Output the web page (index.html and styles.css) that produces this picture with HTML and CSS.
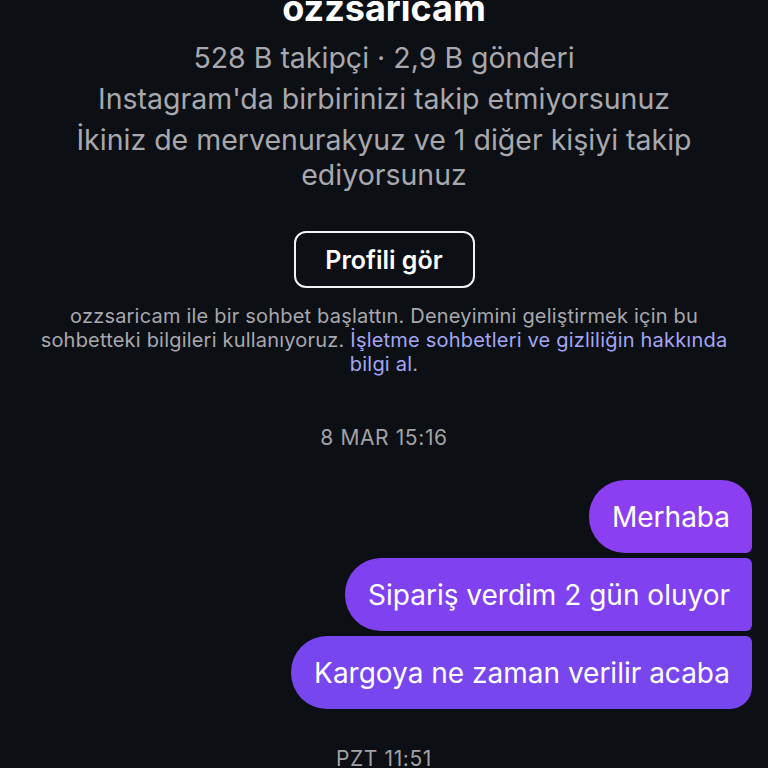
FILE: index.html
```html
<!DOCTYPE html>
<html lang="tr">
<head>
  <meta charset="UTF-8" />
  <meta name="viewport" content="width=device-width, initial-scale=1.0" />
  <title>ozzsaricam</title>
  <link rel="stylesheet" href="styles.css">
</head>
<body>
  <main class="chat">
    <header class="profile">
      <h1 class="profile-name">ozzsaricam</h1>
      <p class="profile-info profile-stats">528 B takipçi · 2,9 B gönderi</p>
      <p class="profile-info">Instagram'da birbirinizi takip etmiyorsunuz</p>
      <p class="profile-info">İkiniz de mervenurakyuz ve 1 diğer kişiyi takip ediyorsunuz</p>
      <a href="#" class="btn-profile">Profili gör</a>
    </header>

    <p class="notice">
      ozzsaricam ile bir sohbet başlattın. Deneyimini geliştirmek için bu sohbetteki bilgileri kullanıyoruz.
      <a href="#" class="notice-link">İşletme sohbetleri ve gizliliğin hakkında bilgi al</a>.
    </p>

    <div class="timestamp">8 MAR 15:16</div>

    <div class="messages">
      <div class="bubble bubble-first">Merhaba</div>
      <div class="bubble bubble-mid">Sipariş verdim 2 gün oluyor</div>
      <div class="bubble bubble-last">Kargoya ne zaman verilir acaba</div>
    </div>

    <div class="timestamp timestamp-bottom">PZT 11:51</div>
  </main>
</body>
</html>
```

FILE: styles.css
```css
body {
  margin: 0;
  background: #0c0f14;
  color: #a8a8ad;
  font-family: Inter, "Noto Sans", sans-serif;
  overflow: hidden;
}

.chat {
  display: flex;
  flex-direction: column;
  align-items: center;
  height: 768px;
}

.profile {
  display: flex;
  flex-direction: column;
  align-items: center;
  text-align: center;
}

.profile-name {
  margin: -14px 0 0;
  font-size: 36px;
  line-height: 44px;
  font-weight: 700;
  color: #fff;
}

.profile-info {
  margin: 6px 0 0;
  max-width: 650px;
  font-size: 28.5px;
  line-height: 35px;
}

.profile-stats {
  margin-top: 10px;
}

.btn-profile {
  margin-top: 39px;
  width: 177px;
  height: 53px;
  border: 2px solid #f2f2f2;
  border-radius: 12px;
  display: flex;
  align-items: center;
  justify-content: center;
  color: #fff;
  font-size: 25px;
  font-weight: 600;
  text-decoration: none;
}

.notice {
  margin: 16px 0 0;
  max-width: 700px;
  font-size: 20px;
  letter-spacing: 0.2px;
  line-height: 24px;
  text-align: center;
}

.notice-link {
  color: #a4a6f4;
  text-decoration: none;
}

.timestamp {
  margin-top: 50px;
  font-size: 21px;
  letter-spacing: 0.6px;
  line-height: 24px;
  color: #a2a2a6;
}

.messages {
  align-self: stretch;
  display: flex;
  flex-direction: column;
  align-items: flex-end;
  gap: 5px;
  margin: 30px 16px 0;
}

.bubble {
  height: 73px;
  padding: 0 22px 0 23px;
  display: flex;
  align-items: center;
  background: #7d45f0;
  color: #fff;
  font-size: 28px;
  border-radius: 36px 6px 6px 36px;
}

.bubble-first {
  background: #8b3ff1;
  border-top-right-radius: 30px;
}

.bubble-mid {
  background: #8042f1;
}

.bubble-last {
  background: #7746ef;
  border-bottom-right-radius: 22px;
}

.timestamp-bottom {
  margin-top: 38px;
}
```
